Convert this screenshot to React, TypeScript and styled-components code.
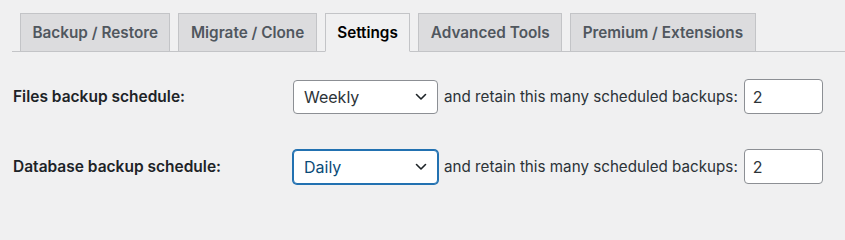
import React from 'react';
import styled, {createGlobalStyle} from 'styled-components';

const TABS = [
  'Backup / Restore',
  'Migrate / Clone',
  'Settings',
  'Advanced Tools',
  'Premium / Extensions',
];

const SCHEDULES = [
  {label: 'Files backup schedule:', value: 'Weekly', retain: '2', focused: false},
  {label: 'Database backup schedule:', value: 'Daily', retain: '2', focused: true},
];

const App = () => {
  return (
    <>
      <GlobalStyle />
      <Page>
        <TabBar>
          {TABS.map((tab) => (
            <Tab key={tab} active={tab === 'Settings'}>
              {tab}
            </Tab>
          ))}
        </TabBar>
        <Form>
          {SCHEDULES.map((row) => (
            <Row key={row.label}>
              <Label>{row.label}</Label>
              <Controls>
                <Select focused={row.focused}>
                  <span>{row.value}</span>
                  <Chevron />
                </Select>
                <Text>and retain this many scheduled backups:</Text>
                <NumberInput>{row.retain}</NumberInput>
              </Controls>
            </Row>
          ))}
        </Form>
      </Page>
    </>
  );
};

const Chevron = () => (
  <svg width="12" height="8" viewBox="0 0 12 8" fill="none">
    <path
      d="M1.5 1.5L6 6L10.5 1.5"
      stroke="#1d2327"
      strokeWidth="1.6"
      strokeLinecap="round"
      strokeLinejoin="round"
    />
  </svg>
);

const GlobalStyle = createGlobalStyle`
  body {
    margin: 0;
    background: #f0f0f1;
    font-family: Inter, "Liberation Sans", sans-serif;
    color: #1d2327;
  }
`;

const Page = styled.div`
  width: 845px;
  height: 215px;
  padding-left: 12px;
  box-sizing: border-box;
  overflow: hidden;
`;

const TabBar = styled.div`
  display: flex;
  gap: 8px;
  padding: 13px 0 0 8px;
  border-bottom: 1px solid #c3c4c7;
`;

const Tab = styled.div<{active: boolean}>`
  height: 39px;
  box-sizing: border-box;
  padding: 0 11.5px;
  display: flex;
  align-items: center;
  margin-bottom: -1px;
  border: 1px solid #c3c4c7;
  border-bottom: 1px solid ${({active}) => (active ? '#f0f0f1' : '#c3c4c7')};
  background: ${({active}) => (active ? '#f0f0f1' : '#dcdcde')};
  color: ${({active}) => (active ? '#000' : '#50575e')};
  font-size: 15.3px;
  font-weight: 600;
  white-space: nowrap;
`;

const Form = styled.div`
  display: flex;
  flex-direction: column;
  gap: 35px;
  padding: 27px 0 0 1px;
`;

const Row = styled.div`
  display: grid;
  grid-template-columns: 280px auto;
  align-items: center;
`;

const Label = styled.div`
  font-size: 15.5px;
  font-weight: 600;
  color: #1d2327;
`;

const Controls = styled.div`
  display: flex;
  align-items: center;
  gap: 6px;
`;

const Select = styled.div<{focused: boolean}>`
  width: 145px;
  height: 34px;
  box-sizing: border-box;
  display: flex;
  align-items: center;
  justify-content: space-between;
  padding: 0 10px;
  background: #fff;
  border-radius: 4px;
  border: 1px solid ${({focused}) => (focused ? '#2271b1' : '#8c8f94')};
  box-shadow: ${({focused}) => (focused ? '0 0 0 1px #2271b1' : 'none')};
  color: ${({focused}) => (focused ? '#0a4b78' : '#2c3338')};
  font-size: 16px;
`;

const Text = styled.span`
  font-size: 15.2px;
  color: #2c3338;
  white-space: nowrap;
`;

const NumberInput = styled.div`
  width: 79px;
  height: 35px;
  box-sizing: border-box;
  display: flex;
  align-items: center;
  padding: 0 8px;
  background: #fff;
  border: 1px solid #8c8f94;
  border-radius: 4px;
  font-size: 16px;
  color: #2c3338;
`;

export default App;
